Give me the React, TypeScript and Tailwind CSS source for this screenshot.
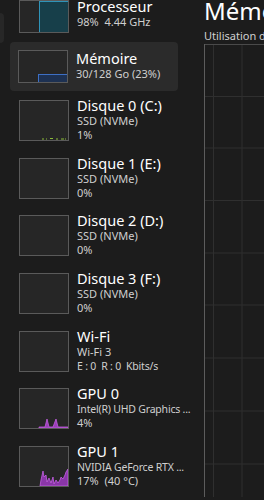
import React from "react";

type Item = {
  title: string;
  lines: string[];
  graph?: React.ReactNode;
};

const font = { fontFamily: '"Noto Sans", "Open Sans", sans-serif' };

const Thumb: React.FC<{ h?: string; children?: React.ReactNode }> = ({ h = "h-[41px]", children }) => (
  <div className={`relative w-[50px] ${h} shrink-0 border border-[#5a5a5a] bg-[#262626] overflow-hidden`}>
    {children}
  </div>
);

const DiskDots = () => (
  <svg className="absolute inset-0" width="48" height="39" viewBox="0 0 48 39">
    <path d="M22 38h2M26 38h1M30 37.5h3M36 38h2M41 38h3M45 38h1" stroke="#8bbb3a" strokeWidth="1" />
  </svg>
);

const Gpu0Graph = () => (
  <svg className="absolute inset-0" width="48" height="39" viewBox="0 0 48 39">
    <path d="M19 39V38H25L27 30L29 38H33L36 30L38 38H48V39Z" fill="#9b3fb8" stroke="#c25ee0" strokeWidth="0.8" />
  </svg>
);

const Gpu1Graph = () => (
  <svg className="absolute inset-0" width="48" height="39" viewBox="0 0 48 39">
    <path
      d="M20 39L21 33L23 24L24 30L26 28L27 35L29 31L31 36L33 30L34 37L36 33L38 36L40 33L41 30L43 32L45 28L46 25L48 22V39Z"
      fill="#8a36a8"
      stroke="#c35fe2"
      strokeWidth="0.8"
    />
  </svg>
);

const items: Item[] = [
  { title: "Disque 0 (C:)", lines: ["SSD (NVMe)", "1%"], graph: <DiskDots /> },
  { title: "Disque 1 (E:)", lines: ["SSD (NVMe)", "0%"] },
  { title: "Disque 2 (D:)", lines: ["SSD (NVMe)", "0%"] },
  { title: "Disque 3 (F:)", lines: ["SSD (NVMe)", "0%"] },
  { title: "Wi-Fi", lines: ["Wi-Fi 3", "E : 0  R : 0  Kbits/s"] },
  { title: "GPU 0", lines: ["Intel(R) UHD Graphics ...", "4%"], graph: <Gpu0Graph /> },
  { title: "GPU 1", lines: ["NVIDIA GeForce RTX ...", "17%  (40 °C)"], graph: <Gpu1Graph /> },
];

const Row: React.FC<{ item: Item }> = ({ item }) => (
  <div className="flex h-[57.7px] shrink-0 gap-2 pl-[19px]">
    <div className="mt-[3px]">
      <Thumb>{item.graph}</Thumb>
    </div>
    <div className="whitespace-nowrap">
      <div className="text-[14.5px] leading-[17px] text-white">{item.title}</div>
      {item.lines.map((l, i) => (
        <div
          key={i}
          className={`${l.length > 18 ? "text-[10.5px] tracking-[-0.2px]" : "text-[11px]"} leading-[14px] text-[#cfcfcf] whitespace-pre`}
        >
          {l}
        </div>
      ))}
    </div>
  </div>
);

const Chart = () => (
  <svg width="60" height="453" viewBox="0 0 60 453" className="block">
    {[52.5, 104, 156.5, 209, 261, 314, 367, 420].map((y) => (
      <line key={y} x1="0" x2="60" y1={y} y2={y} stroke="#2f2f2f" strokeWidth="1" />
    ))}
    <line x1="9.5" x2="9.5" y1="0" y2="453" stroke="#2f2f2f" strokeWidth="1" />
    <line x1="38" x2="38" y1="0" y2="453" stroke="#2f2f2f" strokeWidth="1" />
    <line x1="0" x2="60" y1="0.5" y2="0.5" stroke="#4a4a4a" strokeWidth="1" />
    <line x1="0.5" x2="0.5" y1="0" y2="453" stroke="#5c5c5c" strokeWidth="1" />
  </svg>
);

export default function App() {
  return (
    <div className="flex h-[500px] w-[264px] overflow-hidden bg-[#1c1c1c]" style={font}>
      {/* nav edge */}
      <div className="w-[10px] shrink-0 pt-[13px]">
        <div className="h-[30px] w-[4px] rounded-r-[4px] bg-[#272727]" />
      </div>

      {/* list */}
      <div className="flex w-[184px] shrink-0 flex-col overflow-hidden">
        <div className="-mt-[2px] flex h-[44px] shrink-0 gap-2 pl-[9px]">
          <div className="mt-[2px]">
            <Thumb h="h-[33px]">
              <div className="absolute inset-y-0 left-[19px] right-0 border-l border-t border-[#2f93b8] bg-[#173f4a]" />
            </Thumb>
          </div>
          <div className="whitespace-nowrap">
            <div className="text-[14.5px] leading-[17px] text-white">Processeur</div>
            <div className="text-[11px] leading-[14px] text-[#cfcfcf] whitespace-pre">98%  4.44 GHz</div>
          </div>
        </div>

        <div className="mr-[16px] flex h-[49px] shrink-0 gap-2 rounded-[4px] bg-[#2b2b2b] pl-[8px] pt-[8px]">
          <Thumb h="h-[33px]">
            <div className="absolute bottom-0 left-[19px] right-0 h-[8px] border-l border-t border-[#3d6fc4] bg-[#1d3152]" />
          </Thumb>
          <div className="whitespace-nowrap">
            <div className="text-[14.5px] leading-[17px] text-white">Mémoire</div>
            <div className="text-[11px] leading-[14px] text-[#cfcfcf]">30/128 Go (23%)</div>
          </div>
        </div>

        <div className="ml-[-10px] mt-[6px] flex flex-col">
          {items.map((it) => (
            <Row key={it.title} item={it} />
          ))}
        </div>
      </div>

      {/* details */}
      <div className="ml-[10px] flex min-w-0 flex-1 flex-col">
        <div className="-mt-[4px] whitespace-nowrap text-[24px] leading-[30px] text-white">Mémoire</div>
        <div className="mt-[3px] whitespace-nowrap text-[11px] leading-[14px] text-[#d0d0d0]">Utilisation de la mémoire</div>
        <div className="mt-[1px]">
          <Chart />
        </div>
      </div>
    </div>
  );
}
